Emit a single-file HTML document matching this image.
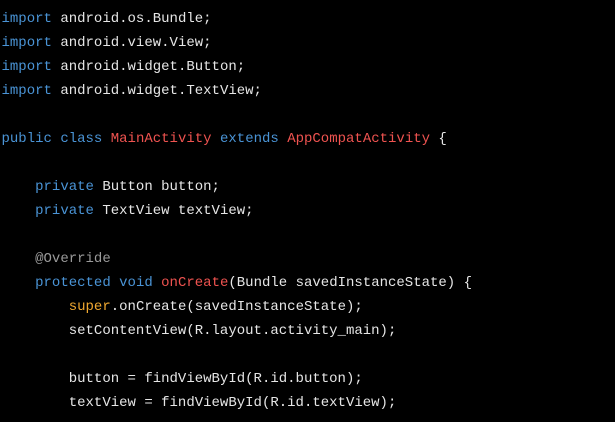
<!DOCTYPE html>
<html><head><style>
html,body{margin:0;padding:0;background:#000;width:615px;height:422px;overflow:hidden}
pre{margin:0;padding:7px 0 0 1.5px;font-family:"Liberation Mono",monospace;font-size:14px;line-height:24px;color:#e6e6e6}
.k{color:#4a94d6}.t{color:#ef5350}.c{color:#9a9a9a}.s{color:#f0a830}
</style></head><body><pre><span class="k">import</span> android.os.Bundle;
<span class="k">import</span> android.view.View;
<span class="k">import</span> android.widget.Button;
<span class="k">import</span> android.widget.TextView;

<span class="k">public</span> <span class="k">class</span> <span class="t">MainActivity</span> <span class="k">extends</span> <span class="t">AppCompatActivity</span> {

    <span class="k">private</span> Button button;
    <span class="k">private</span> TextView textView;

    <span class="c">@Override</span>
    <span class="k">protected</span> <span class="k">void</span> <span class="t">onCreate</span>(Bundle savedInstanceState) {
        <span class="s">super</span>.onCreate(savedInstanceState);
        setContentView(R.layout.activity_main);

        button = findViewById(R.id.button);
        textView = findViewById(R.id.textView);
</pre></body></html>
